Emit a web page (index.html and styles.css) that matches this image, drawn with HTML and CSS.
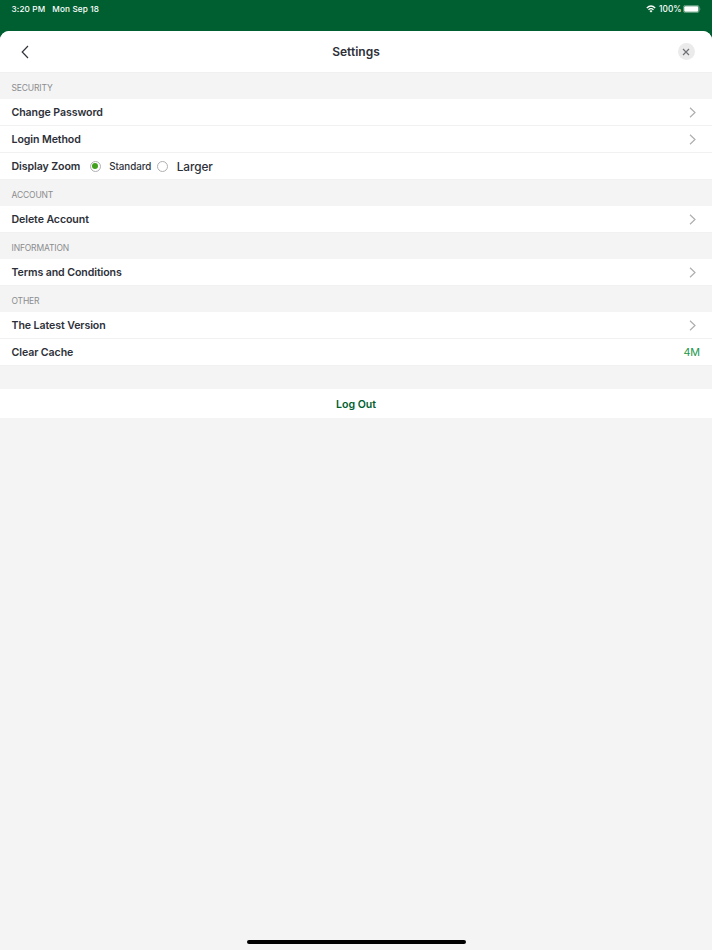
FILE: index.html
```html
<!DOCTYPE html>
<html lang="en">
<head>
    <meta charset="UTF-8">
    <meta name="viewport" content="width=device-width, initial-scale=1.0">
    <title>Settings</title>
    <link rel="stylesheet" href="styles.css">
</head>
<body>

<div class="status-bar">
    <span class="time">3:20 PM</span>
    <span class="date">Mon Sep 18</span>
    <div class="status-icons">
        <svg class="wifi" width="10" height="8" viewBox="0 0 10 8">
            <path d="M0.8 3 Q5 -0.9 9.2 3 M2.5 4.7 Q5 2.5 7.5 4.7" fill="none" stroke="#fff" stroke-width="1.3"/>
            <path d="M3.5 5.9 Q5 4.8 6.5 5.9 L5 7.5 Z" fill="#fff"/>
        </svg>
        <span class="battery-text">100%</span>
        <svg class="battery" width="18" height="8" viewBox="0 0 18 8">
            <rect x="0.4" y="0.4" width="15.7" height="7.2" rx="2" fill="none" stroke="#7fae95" stroke-width="0.8"/>
            <rect x="1.2" y="1.2" width="14.1" height="5.6" rx="1.2" fill="#fff"/>
            <path d="M16.9 2.8 Q17.8 4 16.9 5.2 Z" fill="#7fae95"/>
        </svg>
    </div>
</div>

<div class="sheet">
    <div class="header">
        <svg class="back" width="8" height="14" viewBox="0 0 8 14">
            <path d="M7 1 L1.2 7 L7 13" fill="none" stroke="#33363d" stroke-width="1.2"/>
        </svg>
        <h1>Settings</h1>
        <div class="close">
            <svg width="8" height="8" viewBox="0 0 8 8">
                <path d="M1 1 L7 7 M7 1 L1 7" fill="none" stroke="#707175" stroke-width="1.2"/>
            </svg>
        </div>
    </div>

    <!-- Security -->
    <h2>SECURITY</h2>
    <div class="row">
        <span>Change Password</span>
        <svg class="arrow" width="7" height="11" viewBox="0 0 7 11"><path d="M1 0.7 L6 5.5 L1 10.3"/></svg>
    </div>
    <div class="row">
        <span>Login Method</span>
        <svg class="arrow" width="7" height="11" viewBox="0 0 7 11"><path d="M1 0.7 L6 5.5 L1 10.3"/></svg>
    </div>
    <div class="row">
        <span class="zoom-label">Display Zoom</span>
        <span class="radio checked"></span>
        <span class="standard">Standard</span>
        <span class="radio"></span>
        <span class="larger">Larger</span>
    </div>

    <!-- Account -->
    <h2>ACCOUNT</h2>
    <div class="row">
        <span>Delete Account</span>
        <svg class="arrow" width="7" height="11" viewBox="0 0 7 11"><path d="M1 0.7 L6 5.5 L1 10.3"/></svg>
    </div>

    <!-- Information -->
    <h2>INFORMATION</h2>
    <div class="row">
        <span>Terms and Conditions</span>
        <svg class="arrow" width="7" height="11" viewBox="0 0 7 11"><path d="M1 0.7 L6 5.5 L1 10.3"/></svg>
    </div>

    <!-- Other -->
    <h2>OTHER</h2>
    <div class="row">
        <span>The Latest Version</span>
        <svg class="arrow" width="7" height="11" viewBox="0 0 7 11"><path d="M1 0.7 L6 5.5 L1 10.3"/></svg>
    </div>
    <div class="row">
        <span>Clear Cache</span>
        <span class="value">4M</span>
    </div>

    <div class="logout">Log Out</div>

    <div class="home-bar"></div>
</div>

</body>
</html>
```
FILE: styles.css
```css
* {
    box-sizing: border-box;
}

body {
    font-family: Inter, sans-serif;
    background-color: #005f30;
    color: #2d3038;
    margin: 0;
    height: 950px;
    display: flex;
    flex-direction: column;
    overflow: hidden;
}

.status-bar {
    display: flex;
    align-items: center;
    height: 31px;
    padding: 0 11px 14px 11.5px;
    color: #fff;
    font-size: 8.2px;
    font-weight: 500;
    letter-spacing: 0.14px;
    white-space: nowrap;
}

.date {
    margin-left: 7px;
}

.status-icons {
    display: flex;
    align-items: center;
    margin-left: auto;
}

.battery-text {
    margin: 0 1.5px 0 3px;
    font-size: 8.3px;
    letter-spacing: 0;
}

.sheet {
    display: flex;
    flex-direction: column;
    flex: 1;
    background-color: #f4f4f4;
    border-radius: 9px 9px 0 0;
    overflow: hidden;
}

.header {
    display: flex;
    align-items: center;
    justify-content: space-between;
    height: 42px;
    padding: 0 17px 0 21px;
    background-color: #fff;
    border-bottom: 1px solid #f0f0f0;
}

.header h1 {
    margin: 0 0 0 5px;
    font-size: 12px;
    font-weight: 600;
}

.close {
    display: flex;
    align-items: center;
    justify-content: center;
    width: 17px;
    height: 17px;
    border-radius: 50%;
    background-color: #ebebeb;
}

h2 {
    height: 26px;
    margin: 0;
    padding: 4px 0 0 11.5px;
    color: #8b8c8f;
    font-size: 8.5px;
    font-weight: 400;
    letter-spacing: -0.15px;
    line-height: 23px;
}

.row {
    display: flex;
    align-items: center;
    height: 27px;
    padding: 0 12px 0 11.5px;
    background-color: #fff;
    border-bottom: 1px solid #f1f1f1;
    font-size: 10.6px;
    font-weight: 600;
    letter-spacing: -0.09px;
}

.arrow {
    margin: 0 4px 0 auto;
    fill: none;
    stroke: #aeaeb0;
    stroke-width: 1.2;
}

.zoom-label {
    margin-right: 9.5px;
}

.radio {
    display: flex;
    align-items: center;
    justify-content: center;
    width: 11px;
    height: 11px;
    border: 1px solid #b0b0b2;
    border-radius: 50%;
}

.checked::after {
    content: "";
    width: 6px;
    height: 6px;
    border-radius: 50%;
    background-color: #43a01f;
}

.standard {
    margin: 0 6px 0 8.5px;
    font-size: 9.8px;
    font-weight: 500;
    letter-spacing: -0.05px;
}

.larger {
    margin-left: 8.5px;
    padding-top: 1px;
    font-size: 11.8px;
    font-weight: 500;
}

.value {
    margin-left: auto;
    color: #22964a;
    font-size: 10.8px;
    font-weight: 400;
}

.logout {
    height: 29px;
    margin-top: 23px;
    background-color: #fff;
    color: #005f30;
    font-size: 10.6px;
    font-weight: 600;
    line-height: 31px;
    text-align: center;
}

.home-bar {
    width: 219px;
    height: 4px;
    margin: auto auto 6px;
    border-radius: 2px;
    background-color: #000;
}
```
